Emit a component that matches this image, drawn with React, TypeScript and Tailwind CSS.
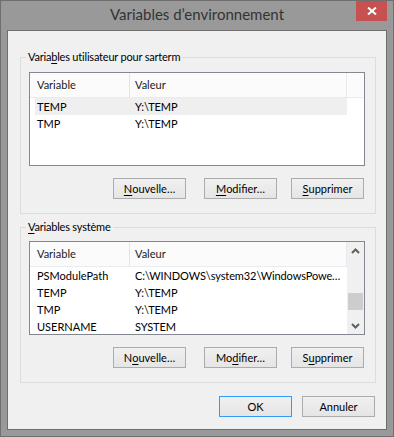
import React from 'react';

type Row = { name: string; value: string; selected?: boolean };

const userVars: Row[] = [
  { name: 'TEMP', value: 'Y:\\TEMP', selected: true },
  { name: 'TMP', value: 'Y:\\TEMP' },
];

const systemVars: Row[] = [
  { name: 'PSModulePath', value: 'C:\\WINDOWS\\system32\\WindowsPowe…' },
  { name: 'TEMP', value: 'Y:\\TEMP' },
  { name: 'TMP', value: 'Y:\\TEMP' },
  { name: 'USERNAME', value: 'SYSTEM' },
];

// label with one underlined mnemonic letter
const Mnemonic: React.FC<{ text: string; at: number }> = ({ text, at }) => (
  <>
    {text.slice(0, at)}
    <span className="underline underline-offset-[2px]">{text[at]}</span>
    {text.slice(at + 1)}
  </>
);

const Button: React.FC<{ children: React.ReactNode; className?: string; primary?: boolean }> = ({
  children,
  className = '',
  primary,
}) => (
  <button
    className={`w-[73px] h-[21px] flex items-center justify-center border bg-linear-to-b from-[#f0f0f0] to-[#e5e5e5] text-[11px] leading-none text-black ${
      primary ? 'border-[#3399ff]' : 'border-[#acacac]'
    } ${className}`}
  >
    {children}
  </button>
);

const Chevron: React.FC<{ down?: boolean }> = ({ down }) => (
  <svg width="9" height="6" viewBox="0 0 9 6" className={down ? 'rotate-180' : ''}>
    <path d="M1 5 L4.5 1.5 L8 5" fill="none" stroke="#606060" strokeWidth="2" />
  </svg>
);

const VarList: React.FC<{ rows: Row[]; scroll?: boolean }> = ({ rows, scroll }) => (
  <div className="w-[336px] h-[94px] border border-[#828790] bg-white overflow-hidden flex text-[11px]">
    <div className="w-[317px] shrink-0">
      <div className="h-[25px] flex bg-[#fbfbfb] border-b border-[#e8ecf0] text-[#1a1a1a]">
        <div className="w-[99px] shrink-0 pl-[7px] pt-px flex items-center">Variable</div>
        <div className="w-px shrink-0 bg-[#e5e5e5]" />
        <div className="w-[216px] shrink-0 pl-[5px] pt-px flex items-center">Valeur</div>
        <div className="w-px shrink-0 bg-[#e5eaf0]" />
      </div>
      {rows.map((r) => (
        <div
          key={r.name}
          className={`ml-[5px] w-[312px] h-[17px] pt-px flex items-center whitespace-nowrap ${r.selected ? 'bg-[#efefef]' : ''}`}
        >
          <div className="w-[100px] shrink-0 pl-[2px]">{r.name}</div>
          <div className="shrink-0 tracking-[-0.1px]">{r.value}</div>
        </div>
      ))}
    </div>
    {scroll ? (
      <div className="w-[17px] shrink-0 bg-[#f0f0f0] flex flex-col">
        <div className="h-[17px] flex items-center justify-center">
          <Chevron />
        </div>
        <div className="flex-1 pt-[34px]">
          <div className="ml-px w-[15px] h-[17px] bg-[#cdcdcd]" />
        </div>
        <div className="h-[17px] flex items-center justify-center">
          <Chevron down />
        </div>
      </div>
    ) : (
      <div className="flex-1">
        <div className="h-[25px] bg-[#fbfbfb] border-b border-[#e8ecf0]" />
      </div>
    )}
  </div>
);

const Group: React.FC<{
  label: React.ReactNode;
  rows: Row[];
  scroll?: boolean;
  listTop: string;
  mn: [number, number, number];
  className?: string;
}> = ({ label, rows, scroll, listTop, mn, className = '' }) => (
  <div className={`relative ml-[12px] w-[356px] border border-[#dcdcdc] pl-[8px] pb-[14px] ${listTop} ${className}`}>
    <div className="absolute -top-[9px] left-[5px] px-[2px] bg-[#f0f0f0] leading-[16px] text-[11px] tracking-[-0.2px] text-black">
      {label}
    </div>
    <VarList rows={rows} scroll={scroll} />
    <div className="flex mt-[12px] ml-[84px]">
      <Button>
        <Mnemonic text="Nouvelle…" at={mn[0]} />
      </Button>
      <Button className="ml-[18px]">
        <Mnemonic text="Modifier…" at={mn[1]} />
      </Button>
      <Button className="ml-[14px]">
        <Mnemonic text="Supprimer" at={mn[2]} />
      </Button>
    </div>
  </div>
);

export default function App() {
  return (
    <div className="relative w-[394px] h-[437px] bg-[#999999] border border-[#6f6f6f] font-['Lato',sans-serif] text-[11px] text-black">
      <div className="h-[29px] flex items-center justify-center text-[15px] text-[#333333] pb-[2px]">
        Variables d’environnement
      </div>
      <div className="absolute top-0 right-[6px] w-[31px] h-[20px] bg-[#c75050] flex items-center justify-center">
        <svg width="10" height="8" viewBox="0 0 10 8">
          <path d="M1 0.5 L9 7.5 M9 0.5 L1 7.5" stroke="#ffffff" strokeWidth="2" />
        </svg>
      </div>
      <div className="ml-[6px] w-[380px] h-[400px] border border-[#6e6e6e] bg-[#f0f0f0] pt-[26px]">
        <Group
          label={<Mnemonic text="Variables utilisateur pour sarterm" at={5} />}
          rows={userVars}
          listTop="pt-[14px]"
          mn={[0, 0, 0]}
        />
        <Group
          label={<Mnemonic text="Variables système" at={0} />}
          rows={systemVars}
          scroll
          listTop="pt-[13px]"
          mn={[1, 2, 1]}
          className="mt-[13px]"
        />
        <div className="flex mt-[13px] ml-[211px]">
          <Button primary>OK</Button>
          <Button className="ml-[10px]">Annuler</Button>
        </div>
      </div>
    </div>
  );
}
